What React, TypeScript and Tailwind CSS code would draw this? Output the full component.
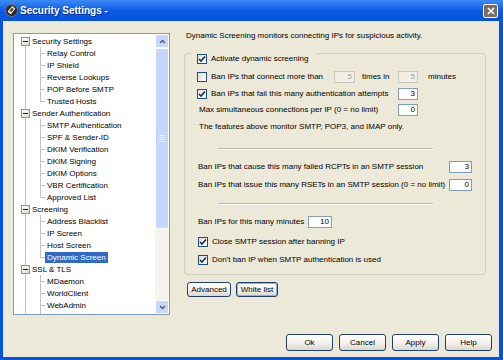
import type { ReactNode } from 'react'

type TreeNode = { label: string; root?: boolean; selected?: boolean }

const tree: TreeNode[] = [
  { label: 'Security Settings', root: true },
  { label: 'Relay Control' },
  { label: 'IP Shield' },
  { label: 'Reverse Lookups' },
  { label: 'POP Before SMTP' },
  { label: 'Trusted Hosts' },
  { label: 'Sender Authentication', root: true },
  { label: 'SMTP Authentication' },
  { label: 'SPF & Sender-ID' },
  { label: 'DKIM Verification' },
  { label: 'DKIM Signing' },
  { label: 'DKIM Options' },
  { label: 'VBR Certification' },
  { label: 'Approved List' },
  { label: 'Screening', root: true },
  { label: 'Address Blacklist' },
  { label: 'IP Screen' },
  { label: 'Host Screen' },
  { label: 'Dynamic Screen', selected: true },
  { label: 'SSL & TLS', root: true },
  { label: 'MDaemon' },
  { label: 'WorldClient' },
  { label: 'WebAdmin' },
  { label: 'STARTTLS White List' },
]

function TreeRow({ node, first, lastChild }: { node: TreeNode; first: boolean; lastChild: boolean }) {
  return (
    <div className={`relative h-[12px] flex items-center whitespace-nowrap ${node.root ? 'pl-[16px]' : 'pl-[31px]'}`}>
      {/* trunk line */}
      <div className={`absolute left-[11px] w-px bg-[#c4c4bc] bottom-0 ${first ? 'top-[6px]' : 'top-0'}`} />
      {node.root ? (
        <div className="absolute left-[7px] top-[2px] w-[9px] h-[9px] border border-[#7a96b0] bg-gradient-to-br from-white to-[#dcd8cc] flex items-center justify-center">
          <div className="w-[5px] h-px bg-[#1c1c1c]" />
        </div>
      ) : (
        <>
          <div className={`absolute left-[26px] w-px bg-[#c4c4bc] top-0 ${lastChild ? 'h-[6px]' : 'bottom-0'}`} />
          <div className="absolute left-[26px] top-[6px] w-[5px] h-px bg-[#c4c4bc]" />
        </>
      )}
      <span
        className={`h-[11px] leading-[11px] px-[2px] ${node.selected ? 'bg-[#316ac5] text-white' : 'text-black'}`}
      >
        {node.label}
      </span>
    </div>
  )
}

function Chevron({ down }: { down?: boolean }) {
  return (
    <svg width="7" height="5" viewBox="0 0 7 5">
      <polyline
        points={down ? '1,1 3.5,3.5 6,1' : '1,4 3.5,1.5 6,4'}
        fill="none"
        stroke="#4d6185"
        strokeWidth="1.5"
      />
    </svg>
  )
}

function Scrollbar() {
  return (
    <div className="w-[14px] flex flex-col bg-[#f4f3ee]">
      <div className="h-[14px] rounded-[2px] border border-white bg-[#c7d6fb] flex items-center justify-center">
        <Chevron />
      </div>
      <div className="h-[181px] rounded-[2px] border border-white bg-[#c5d5fc] flex flex-col items-center justify-center gap-px">
        <div className="w-[6px] h-px bg-[#eef3fe]" />
        <div className="w-[6px] h-px bg-[#eef3fe]" />
        <div className="w-[6px] h-px bg-[#eef3fe]" />
        <div className="w-[6px] h-px bg-[#eef3fe]" />
      </div>
      <div className="flex-1" />
      <div className="h-[14px] rounded-[2px] border border-white bg-[#c7d6fb] flex items-center justify-center">
        <Chevron down />
      </div>
    </div>
  )
}

function Tree() {
  return (
    <div className="mt-[3px] w-[157px] h-[282px] border border-[#7f9db9] bg-white flex">
      <div className="flex-1 overflow-hidden pt-px">
        {tree.map((node, i) => {
          const next = tree[i + 1]
          const lastChild = !node.root && (!next || !!next.root)
          return <TreeRow key={node.label} node={node} first={i === 0} lastChild={lastChild} />
        })}
      </div>
      <Scrollbar />
    </div>
  )
}

function Check({ checked }: { checked?: boolean }) {
  return (
    <div className="w-[10px] h-[10px] shrink-0 border border-[#1c5180] bg-gradient-to-br from-[#dcdcd6] to-white flex items-center justify-center">
      {checked && (
        <svg width="8" height="8" viewBox="0 0 8 8">
          <polyline points="1,4 3,6 7,1.5" fill="none" stroke="#1f2a55" strokeWidth="1.6" />
        </svg>
      )}
    </div>
  )
}

function NumBox({ value, w, disabled }: { value: string; w: string; disabled?: boolean }) {
  return (
    <div
      className={`${w} h-[12px] shrink-0 border text-right pr-[2px] leading-[10px] ${
        disabled ? 'border-[#c9c7ba] bg-[#f2f0e6] text-[#a3a196]' : 'border-[#7f9db9] bg-white text-black'
      }`}
    >
      {value}
    </div>
  )
}

function Sep() {
  return <div className="ml-[21px] w-[215px] h-[2px] border-t border-[#b9b6a6] border-b border-b-white" />
}

function XpButton({ children, w, h, focus }: { children: ReactNode; w: string; h: string; focus?: boolean }) {
  return (
    <div
      className={`${w} ${h} rounded-[3px] border border-[#20406e] bg-gradient-to-b from-white via-[#f4f3ee] to-[#dcd7cb] flex items-center justify-center text-black ${
        focus ? 'shadow-[inset_0_0_0_1px_#8db2e3]' : ''
      }`}
    >
      {children}
    </div>
  )
}

function RightPanel() {
  return (
    <div className="ml-[14px] flex flex-col">
      <div className="ml-[2px] h-[12px] leading-[12px]">
        Dynamic Screening monitors connecting IPs for suspicious activity.
      </div>

      <div className="relative mt-[11px] w-[302px] rounded-[3px] border border-[#d0d0bf] pl-[12px] pb-[7px] flex flex-col">
        <div className="absolute left-[7px] -top-[2px] w-[125px] h-[14px] bg-[#ece9d8] pl-[5px] flex items-center gap-[4px]">
          <Check checked />
          <span>Activate dynamic screening</span>
        </div>

        <div className="mt-[16px] h-[14px] flex items-center">
          <div className="w-[137px] flex items-center gap-[4px]">
            <Check />
            <span>Ban IPs that connect more than</span>
          </div>
          <NumBox value="5" w="w-[21px]" disabled />
          <span className="ml-[7px] w-[36px]">times in</span>
          <NumBox value="5" w="w-[20px]" disabled />
          <span className="ml-[10px]">minutes</span>
        </div>

        <div className="mt-[3px] h-[14px] flex items-center">
          <div className="w-[201px] flex items-center gap-[4px]">
            <Check checked />
            <span>Ban IPs that fail this many authentication attempts</span>
          </div>
          <NumBox value="3" w="w-[20px]" />
        </div>

        <div className="mt-[2px] h-[14px] flex items-center">
          <span className="ml-[2px] w-[199px]">Max simultaneous connections per IP (0 = no limit)</span>
          <NumBox value="0" w="w-[20px]" />
        </div>

        <div className="mt-[3px] h-[14px] flex items-center">
          <span className="ml-[2px]">The features above monitor SMTP, POP3, and IMAP only.</span>
        </div>

        <div className="mt-[14px]">
          <Sep />
        </div>

        <div className="mt-[10px] h-[14px] flex items-center">
          <span className="ml-px w-[251px]">Ban IPs that cause this many failed RCPTs in an SMTP session</span>
          <NumBox value="3" w="w-[23px]" />
        </div>

        <div className="mt-[4px] h-[14px] flex items-center">
          <span className="ml-px w-[251px]">Ban IPs that issue this many RSETs in an SMTP session (0 = no limit)</span>
          <NumBox value="0" w="w-[23px]" />
        </div>

        <div className="mt-[11px]">
          <Sep />
        </div>

        <div className="mt-[10px] h-[14px] flex items-center">
          <span className="ml-px w-[110px]">Ban IPs for this many minutes</span>
          <NumBox value="10" w="w-[24px]" />
        </div>

        <div className="mt-[6px] h-[14px] flex items-center gap-[4px] pl-px">
          <Check checked />
          <span>Close SMTP session after banning IP</span>
        </div>

        <div className="mt-[4px] h-[14px] flex items-center gap-[4px] pl-px">
          <Check checked />
          <span>Don't ban IP when SMTP authentication is used</span>
        </div>
      </div>

      <div className="mt-[7px] ml-[3px] flex gap-[5px]">
        <XpButton w="w-[44px]" h="h-[15px]">Advanced</XpButton>
        <XpButton w="w-[42px]" h="h-[15px]" focus>
          White list
        </XpButton>
      </div>
    </div>
  )
}

function AppIcon() {
  return (
    <svg width="13" height="13" viewBox="0 0 13 13">
      <circle cx="6.5" cy="6.5" r="6" fill="#2c2522" stroke="#8a8a8a" strokeWidth="0.8" />
      <rect x="4" y="2.5" width="4.5" height="7.5" rx="0.8" fill="#e6e2dc" transform="rotate(40 6.5 6.5)" />
      <rect x="5" y="4" width="2.5" height="4" fill="#5a4a42" transform="rotate(40 6.5 6.5)" />
    </svg>
  )
}

export default function App() {
  return (
    <div className="w-[503px] h-[360px] bg-[#0553e0] flex flex-col font-['Liberation_Sans',Arial,sans-serif] text-[8px] text-black overflow-hidden">
      {/* title bar */}
      <div className="h-[21px] shrink-0 flex items-center pl-[5px] pr-[5px] bg-gradient-to-b from-[#3d8af5] via-[#0a5ae6] to-[#0553dc]">
        <AppIcon />
        <span className="ml-[2px] text-white font-bold text-[10px] [text-shadow:1px_1px_0_#0c2d8a]">
          Security Settings -
        </span>
        <div className="ml-auto w-[15px] h-[14px] rounded-[2px] border border-white bg-[#7b6c64] flex items-center justify-center">
          <svg width="8" height="8" viewBox="0 0 8 8">
            <path d="M1 1 L7 7 M7 1 L1 7" stroke="white" strokeWidth="1.6" />
          </svg>
        </div>
      </div>

      {/* body */}
      <div className="flex-1 ml-[3px] mr-[4px] mb-[3px] bg-[#ece9d8] flex flex-col">
        <div className="pt-[9px] pl-[10px] flex items-start">
          <Tree />
          <RightPanel />
        </div>

        <div className="mt-auto mb-[6px] pr-[7px] flex justify-end gap-[6px]">
          <XpButton w="w-[47px]" h="h-[17px]">Ok</XpButton>
          <XpButton w="w-[47px]" h="h-[17px]">Cancel</XpButton>
          <XpButton w="w-[47px]" h="h-[17px]">Apply</XpButton>
          <XpButton w="w-[47px]" h="h-[17px]">Help</XpButton>
        </div>
      </div>
    </div>
  )
}
